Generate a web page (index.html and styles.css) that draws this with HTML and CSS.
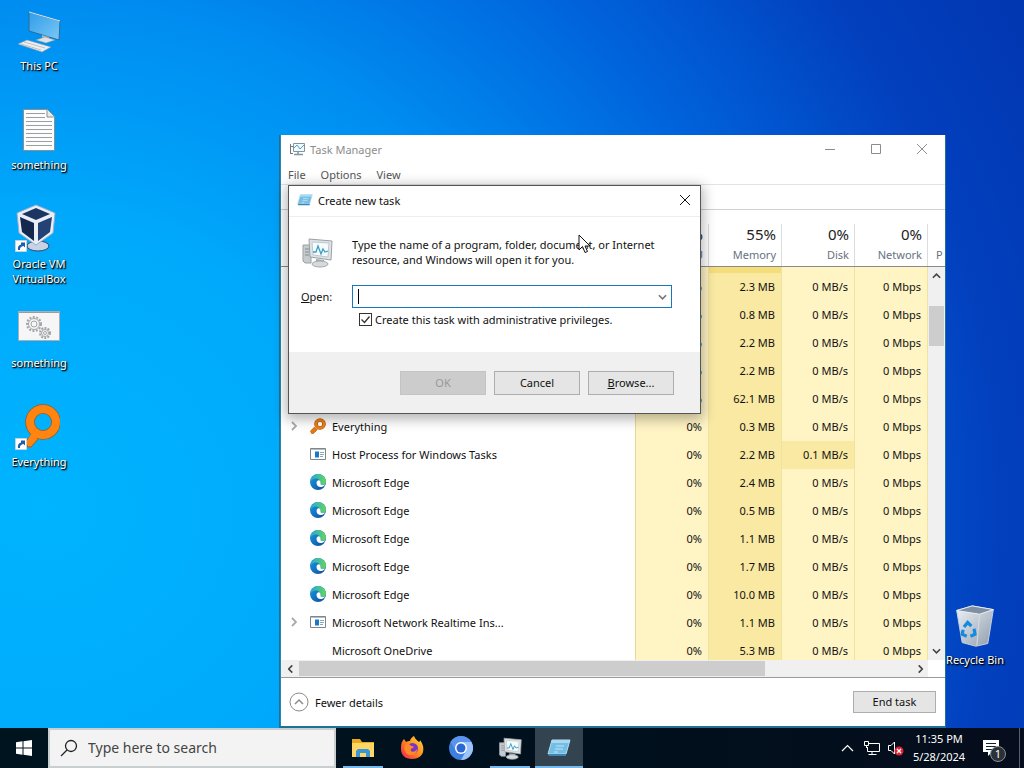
FILE: index.html
```html
<!DOCTYPE html>
<html lang="en">
<head>
    <meta charset="UTF-8">
    <meta name="viewport" content="width=device-width, initial-scale=1.0">
    <title>Desktop</title>
    <link rel="stylesheet" href="styles.css">
</head>
<body>
    <!-- shared icons -->
    <svg class="defs" width="0" height="0">
        <defs>
            <linearGradient id="edgeBlue" x1="0" y1="0" x2="1" y2="1">
                <stop offset="0" stop-color="#1b9de2"/>
                <stop offset="1" stop-color="#0c4a9e"/>
            </linearGradient>
            <linearGradient id="edgeGreen" x1="0" y1="0" x2="1" y2="0">
                <stop offset="0" stop-color="#27a5df"/>
                <stop offset="1" stop-color="#62d65a"/>
            </linearGradient>
            <linearGradient id="screen" x1="0" y1="0" x2="1" y2="1">
                <stop offset="0" stop-color="#2f9de8"/>
                <stop offset="1" stop-color="#7cc8f6"/>
            </linearGradient>
            <linearGradient id="flame" x1="1" y1="0" x2="0" y2="1">
                <stop offset="0" stop-color="#ffe23e"/>
                <stop offset="0.5" stop-color="#ff8a1e"/>
                <stop offset="1" stop-color="#f0185a"/>
            </linearGradient>
            <linearGradient id="bin" x1="0" y1="0" x2="1" y2="1">
                <stop offset="0" stop-color="#eef2f6"/>
                <stop offset="1" stop-color="#8f9cac"/>
            </linearGradient>
            <symbol id="edge" viewBox="0 0 16 16">
                <circle cx="8" cy="8" r="8" fill="url(#edgeBlue)"/>
                <path d="M1 5C3 1 6 0 8 0c5 0 8 4 8 7.500 0 2.500-2 3.500-4 3.500-2.500 0-1.500-1-1.500-2.500C10.500 6 8 4.500 5.500 4.500 3.500 4.500 1.800 5.500 0 8Z" fill="url(#edgeGreen)"/>
                <path d="M6.500 9c0-2 1.500-3 2.500-2.800 1 .2 1.500 1.200 1.500 2.200 0 1.600 0 2.600 2 2.600 1 0 2-.3 2.700-.8C14 12.500 12 13 10.500 13 8.500 13 6.500 11.500 6.500 9Z" fill="#fff"/>
            </symbol>
            <symbol id="host" viewBox="0 0 16 12">
                <path d="M.5.5h15v11H.5z" fill="#fff" stroke="#7f8688"/>
                <path d="M1 1.500h14" stroke="#b7bcbe"/>
                <path d="M5 3.500h4v6H5z" fill="#1a78c8"/>
                <path d="M10 4.500h4M10 6.500h4M10 8.500h3" stroke="#8ba9bd"/>
            </symbol>
            <symbol id="lens" viewBox="0 0 36 44">
                <path d="M11 27 1 38l3 5 3 0 9-10" fill="#ff8410" stroke="#a85a18"/>
                <circle cx="19" cy="18" r="13" fill="none" stroke="#9a5a20" stroke-width="9.500"/>
                <circle cx="19" cy="18" r="13" fill="none" stroke="#ff8410" stroke-width="8"/>
                <path d="M11 24 3 37l4 3 11-11" fill="#ff8410"/>
            </symbol>
            <symbol id="lensSmall" viewBox="0 0 16 16">
                <path d="m4.500 9-4 4 1 2.500h2l1-1 3-3" fill="#e8790f" stroke="#a8560f" stroke-width=".6"/>
                <circle cx="10" cy="6" r="4" fill="none" stroke="#a8560f" stroke-width="3.600"/>
                <circle cx="10" cy="6" r="4" fill="none" stroke="#f07f12" stroke-width="2.600"/>
            </symbol>
            <symbol id="shortcut" viewBox="0 0 12 12">
                <path d="M.5.5h11v11H.5z" fill="#fff" stroke="#c8d4dc"/>
                <path d="M3 10c-.5-3 .5-5 3-5.500V2.500h4v5L8.500 6C6 6.500 4.500 8 5 10Z" fill="#1d5fae"/>
            </symbol>
            <symbol id="pcs" viewBox="0 0 32 32">
                <path d="M2 9h8v18H4L2 25Z" fill="#c6cbce" stroke="#9aa1a5"/>
                <path d="M4 13h4M4 16h4M4 19h4" stroke="#858c90"/>
                <path d="m8 3 23 2-1 19-21-3Z" fill="#dfe3e5" stroke="#9aa1a5"/>
                <path d="m11 6 17 1-1 14-15-2Z" fill="#f5fbfd" stroke="#bfc8cc"/>
                <path d="M12 16h3l2-6 3 8 2-5 2 3 3-1" fill="none" stroke="#3f9fc2" stroke-width="1.300"/>
                <path d="m15 23 8 1v3h-8Z" fill="#a6adb0"/>
                <ellipse cx="19" cy="28" rx="8" ry="3" fill="#d5dadc" stroke="#a3aaae"/>
            </symbol>
            <symbol id="run" viewBox="0 0 24 18">
                <path d="M5 1h18l-4 14H1Z" fill="#74bde4" stroke="#b5def3"/>
                <path d="M5 1h18l-1 3H4Z" fill="#a9d9f1"/>
                <path d="M9 7h8M8 10h8M7 13h4" stroke="#c4e5f6" stroke-width="1.200"/>
                <path d="M1 15h18v2H2Z" fill="#3b86b4"/>
            </symbol>
            <symbol id="chevron" viewBox="0 0 10 6">
                <path d="m1 1 4 4 4-4" fill="none" stroke="currentColor" stroke-width="1.800"/>
            </symbol>
        </defs>
    </svg>

    <main class="desktop">
        <div class="shortcuts">
            <div class="shortcut">
                <svg viewBox="0 0 48 48">
                    <path d="m14 3 31 9-1 19-30-9Z" fill="url(#screen)" stroke="#2b6d9a"/>
                    <path d="m14 3 31 9" stroke="#d7e6ee"/>
                    <path d="m27 26 7 2v3h-7Z" fill="#aab4ba"/>
                    <path d="m21 31 9-3 10 3-9 3Z" fill="#dde3e6" stroke="#8d989e" stroke-width=".5"/>
                    <path d="m3 35 9-4 24 7-9 5Z" fill="#eceff1" stroke="#8d989e" stroke-width=".6"/>
                    <path d="m6 35 20 6M9 33l21 6" stroke="#a5afb5" stroke-width=".7"/>
                </svg>
                <span>This PC</span>
            </div>
            <div class="shortcut">
                <svg viewBox="0 0 48 48">
                    <path d="M8.500 1.500h24l7 7v34h-31Z" fill="#fdfdfd" stroke="#8a8f92"/>
                    <path d="M32 2v7h7" fill="#e6e9ea" stroke="#8a8f92"/>
                    <path d="M11 5.500h19M11 9.500h19M11 13.500h26M11 17.500h26M11 21.500h26M11 25.500h26M11 29.500h26M11 33.500h26M11 37.500h26" stroke="#9a9fa2"/>
                </svg>
                <span>something</span>
            </div>
            <div class="shortcut">
                <svg viewBox="0 0 48 48">
                    <ellipse cx="23" cy="39" rx="11" ry="5" fill="#c7d2e4" stroke="#33486b"/>
                    <path d="m21-2 19 8-2 20-17 12L4 26 2 6Z" fill="#e9eef6" stroke="#9badc8"/>
                    <path d="m21 1 14 6-14 6L7 7Z" fill="#1d3561"/>
                    <path d="m5 10 14 6v18L7 25Z" fill="#14284e"/>
                    <path d="m37 10-14 6v18l12-9Z" fill="#254274"/>
                    <use href="#shortcut" x="0" y="33" width="12" height="12"/>
                </svg>
                <span>Oracle VM<br>VirtualBox</span>
            </div>
            <div class="shortcut">
                <svg viewBox="0 0 48 48">
                    <path d="M3.500 5.500h41v29h-41z" fill="#f6f6f6" stroke="#a9afb2"/>
                    <path d="M4 6.500h40" stroke="#9c9c9c"/>
                    <g fill="none" stroke="#a2a6a8">
                        <circle cx="19" cy="18" r="7" stroke-width="2" stroke-dasharray="2 1.500"/>
                        <circle cx="19" cy="18" r="5.500"/>
                        <circle cx="19" cy="18" r="3"/>
                        <circle cx="30" cy="27" r="5" stroke-width="2" stroke-dasharray="2 1.200"/>
                        <circle cx="30" cy="27" r="3.500"/>
                        <circle cx="30" cy="27" r="1.500"/>
                    </g>
                </svg>
                <span>something</span>
            </div>
            <div class="shortcut">
                <svg viewBox="0 0 48 48">
                    <use href="#lens" x="9" y="-1" width="36" height="44"/>
                    <use href="#shortcut" x="0" y="33" width="12" height="12"/>
                </svg>
                <span>Everything</span>
            </div>
        </div>

        <div class="shortcut recycle-bin">
            <svg viewBox="0 0 48 48">
                <path d="m4 6 17-5 23 4-6 37-13 3-15-4Z" fill="url(#bin)" stroke="#c9d4e0"/>
                <path d="m4 6 17-5 23 4-15 5Z" fill="#7f8ea3" stroke="#eef3f8"/>
                <path d="m29 10-3 34" stroke="#d7dee6"/>
                <g fill="none" stroke="#168ae0" stroke-width="3.500">
                    <path d="m12 24 4-5 4 4M23 26l1 6-5 2M15 34l-5-2 1-5"/>
                </g>
            </svg>
            <span>Recycle Bin</span>
        </div>

        <section class="window task-manager">
            <header class="titlebar">
                <svg class="title-icon" viewBox="0 0 16 16">
                    <path d="M1.500 3v10M1 5.500h3M1 12.500h3" stroke="#777" fill="none"/>
                    <path d="M4.500 2.500h11v8h-11z" fill="#f4fbff" stroke="#8393a0"/>
                    <path d="m5 7 3-3 3 4 4-4" stroke="#4a9fd8" fill="none"/>
                    <path d="M9 11v2M5 13.500h9" stroke="#8393a0" stroke-width="1.500"/>
                </svg>
                <h1>Task Manager</h1>
                <button class="win-btn" aria-label="Minimize"><svg viewBox="0 0 12 12"><path d="M1 6.500h10"/></svg></button>
                <button class="win-btn" aria-label="Maximize"><svg viewBox="0 0 12 12"><path d="M1.500 1.500h9v9h-9z"/></svg></button>
                <button class="win-btn" aria-label="Close"><svg viewBox="0 0 12 12"><path d="m1 1 10 10M11 1 1 11"/></svg></button>
            </header>
            <nav class="menu">
                <button>File</button>
                <button>Options</button>
                <button>View</button>
            </nav>
            <div class="tabs"></div>

            <div class="list">
                <table>
                    <colgroup>
                        <col>
                        <col class="metric">
                        <col class="metric">
                        <col class="metric">
                        <col class="metric">
                        <col class="rest">
                    </colgroup>
                    <thead>
                        <tr>
                            <th></th>
                            <th><b>2%</b>CPU</th>
                            <th><b>55%</b>Memory</th>
                            <th><b>0%</b>Disk</th>
                            <th><b>0%</b>Network</th>
                            <th class="cut">P</th>
                        </tr>
                    </thead>
                    <tbody>
                        <tr class="group"><td></td><td></td><td></td><td></td><td></td><td></td></tr>
                        <tr><td></td><td>0%</td><td>2.3 MB</td><td>0 MB/s</td><td>0 Mbps</td><td></td></tr>
                        <tr><td></td><td>0%</td><td>0.8 MB</td><td>0 MB/s</td><td>0 Mbps</td><td></td></tr>
                        <tr><td></td><td>0%</td><td>2.2 MB</td><td>0 MB/s</td><td>0 Mbps</td><td></td></tr>
                        <tr><td></td><td>0%</td><td>2.2 MB</td><td>0 MB/s</td><td>0 Mbps</td><td></td></tr>
                        <tr><td></td><td>0%</td><td>62.1 MB</td><td>0 MB/s</td><td>0 Mbps</td><td></td></tr>
                        <tr>
                            <td><div class="process"><svg class="expand"><use href="#chevron"/></svg><svg class="app"><use href="#lensSmall"/></svg>Everything</div></td>
                            <td>0%</td><td>0.3 MB</td><td>0 MB/s</td><td>0 Mbps</td><td></td>
                        </tr>
                        <tr>
                            <td><div class="process"><i class="expand"></i><svg class="app"><use href="#host"/></svg>Host Process for Windows Tasks</div></td>
                            <td>0%</td><td>2.2 MB</td><td class="busy">0.1 MB/s</td><td>0 Mbps</td><td></td>
                        </tr>
                        <tr>
                            <td><div class="process"><i class="expand"></i><svg class="app"><use href="#edge"/></svg>Microsoft Edge</div></td>
                            <td>0%</td><td>2.4 MB</td><td>0 MB/s</td><td>0 Mbps</td><td></td>
                        </tr>
                        <tr>
                            <td><div class="process"><i class="expand"></i><svg class="app"><use href="#edge"/></svg>Microsoft Edge</div></td>
                            <td>0%</td><td>0.5 MB</td><td>0 MB/s</td><td>0 Mbps</td><td></td>
                        </tr>
                        <tr>
                            <td><div class="process"><i class="expand"></i><svg class="app"><use href="#edge"/></svg>Microsoft Edge</div></td>
                            <td>0%</td><td>1.1 MB</td><td>0 MB/s</td><td>0 Mbps</td><td></td>
                        </tr>
                        <tr>
                            <td><div class="process"><i class="expand"></i><svg class="app"><use href="#edge"/></svg>Microsoft Edge</div></td>
                            <td>0%</td><td>1.7 MB</td><td>0 MB/s</td><td>0 Mbps</td><td></td>
                        </tr>
                        <tr>
                            <td><div class="process"><i class="expand"></i><svg class="app"><use href="#edge"/></svg>Microsoft Edge</div></td>
                            <td>0%</td><td>10.0 MB</td><td>0 MB/s</td><td>0 Mbps</td><td></td>
                        </tr>
                        <tr>
                            <td><div class="process"><svg class="expand"><use href="#chevron"/></svg><svg class="app"><use href="#host"/></svg>Microsoft Network Realtime Ins...</div></td>
                            <td>0%</td><td>1.1 MB</td><td>0 MB/s</td><td>0 Mbps</td><td></td>
                        </tr>
                        <tr>
                            <td><div class="process"><i class="expand"></i><i class="app"></i>Microsoft OneDrive</div></td>
                            <td>0%</td><td>5.3 MB</td><td>0 MB/s</td><td>0 Mbps</td><td></td>
                        </tr>
                    </tbody>
                </table>
                <div class="scroll-v">
                    <svg class="arrow up"><use href="#chevron"/></svg>
                    <div class="thumb"></div>
                    <svg class="arrow"><use href="#chevron"/></svg>
                </div>
            </div>
            <div class="scroll-h">
                <svg class="arrow left"><use href="#chevron"/></svg>
                <div class="track"><div class="thumb"></div></div>
                <svg class="arrow right"><use href="#chevron"/></svg>
            </div>

            <footer class="tm-footer">
                <button class="fewer">
                    <svg viewBox="0 0 20 20" fill="none" stroke="#8c8c8c"><circle cx="10" cy="10" r="9"/><path d="m6 12 4-4 4 4" stroke-width="1.500"/></svg>
                    Fewer details
                </button>
                <button class="btn end-task">End task</button>
            </footer>
        </section>

        <form class="window dialog" onsubmit="return false">
            <header class="titlebar">
                <svg class="title-icon"><use href="#run"/></svg>
                <h2>Create new task</h2>
                <button type="button" class="win-btn" aria-label="Close"><svg viewBox="0 0 12 12"><path d="m1 1 10 10M11 1 1 11"/></svg></button>
            </header>
            <div class="dialog-body">
                <svg class="dialog-icon"><use href="#pcs"/></svg>
                <p>Type the name of a program, folder, document, or Internet resource, and Windows will open it for you.</p>
                <label for="open"><u>O</u>pen:</label>
                <div class="combo">
                    <i class="caret"></i>
                    <input type="text" id="open">
                    <button type="button" aria-label="Show history"><svg><use href="#chevron"/></svg></button>
                </div>
                <div class="admin">
                    <input type="checkbox" id="admin" checked>
                    <label for="admin">Create this task with administrative privileges.</label>
                </div>
            </div>
            <div class="dialog-footer">
                <button class="btn" disabled>OK</button>
                <button type="button" class="btn">Cancel</button>
                <button type="button" class="btn"><u>B</u>rowse...</button>
            </div>
        </form>

        <svg class="cursor" viewBox="0 0 13 20">
            <path d="M1 1v15l3.500-3.500L7 18.500l2.500-1L7 12h5Z" fill="#fff" stroke="#111"/>
        </svg>
    </main>

    <footer class="taskbar">
        <button class="start" aria-label="Start">
            <svg viewBox="0 0 16 16"><path d="m0 2.200 6.500-.9v6.200H0ZM7.500 1.200 16 0v7.500H7.500ZM0 8.500h6.500v6.200L0 13.800ZM7.500 8.500H16V16l-8.500-1.200Z" fill="#fff"/></svg>
        </button>
        <div class="search">
            <svg viewBox="0 0 18 18" fill="none" stroke="#222" stroke-width="1.300"><circle cx="11" cy="7" r="5.500"/><path d="m7 11-6 6"/></svg>
            <input type="text" placeholder="Type here to search" aria-label="Search">
        </div>
        <div class="apps">
            <button class="open" aria-label="File Explorer">
                <svg viewBox="0 0 24 24">
                    <path d="M1 3h8l2 3h12v15H1Z" fill="#e9a820"/>
                    <path d="M1 7h22v14H1Z" fill="#ffd564"/>
                    <path d="M5 21v-6l2-2h10l2 2v6h-4v-4H9v4Z" fill="#3b95d9"/>
                </svg>
            </button>
            <button aria-label="Firefox">
                <svg viewBox="0 0 24 24">
                    <path d="M2 6c1-2 2-3 2-3l2 3c1-1 3-1 4-1 0-2 2-4 4-5 1 3 3 4 5 6 1-1 1-1 1-2 3 4 4 8 3 12-1 4-5 7-11 7C5 23 1 19 1 13c0-3 0-5 1-7Z" fill="url(#flame)"/>
                    <circle cx="12.500" cy="12.500" r="5.500" fill="#7a35c8"/>
                    <path d="M5 9c3-2 5-1 6 1 3 0 3 1 2 2-2 0-3 2-2 3 2 2 5 0 6-2 0 4-3 6-6 6-5 0-8-5-6-10Z" fill="#ff8b22"/>
                </svg>
            </button>
            <button aria-label="Chromium">
                <svg viewBox="0 0 24 24">
                    <circle cx="12" cy="12" r="12" fill="#3f7fe0"/>
                    <path d="M12 6h10.400A12 12 0 0 1 12 24l5-9Z" fill="#9cc3fa"/>
                    <path d="M1.600 6A12 12 0 0 1 22.400 6H12l-5 9Z" fill="#5a94ec"/>
                    <circle cx="12" cy="12" r="6" fill="#fff"/>
                    <circle cx="12" cy="12" r="4.500" fill="#2b68d2"/>
                </svg>
            </button>
            <button class="open" aria-label="Task Manager">
                <svg><use href="#pcs"/></svg>
            </button>
            <button class="open active" aria-label="Create new task">
                <svg><use href="#run"/></svg>
            </button>
        </div>
        <div class="tray">
            <svg class="tray-up" viewBox="0 0 13 8"><path d="m1 7 5.500-5.500L12 7" fill="none" stroke="#fff" stroke-width="1.200"/></svg>
            <svg class="tray-icon" viewBox="0 0 16 16" fill="none" stroke="#fff"><path d="M5 3.500h10.500v8H3.500V7M8 12v2.500M4.500 14.500h8M.5 1.500h4v4h-4zM2.500 6v2"/></svg>
            <svg class="tray-icon" viewBox="0 0 16 16"><path d="M.5 5.500H3l3.500-3.500v12L3 10.500H.5Z" fill="none" stroke="#fff"/><circle cx="11" cy="11" r="4.500" fill="#dc2334"/><path d="m9 9 4 4M13 9l-4 4" stroke="#fff" stroke-width="1.300"/></svg>
            <div class="clock">
                <time>11:35 PM</time>
                <time>5/28/2024</time>
            </div>
            <button class="notify" aria-label="Notifications">
                <svg viewBox="0 0 16 16"><path d="M0 0h16v12h-7l-4 4v-4H0Z" fill="#fff"/><path d="M3 3.500h10M3 6.500h10M3 9.500h6" stroke="#10202c"/></svg>
                <span class="badge">1</span>
            </button>
        </div>
    </footer>
</body>
</html>
```
FILE: styles.css
```css
* {
    box-sizing: border-box;
}
body {
    margin: 0;
    height: 100vh;
    display: flex;
    flex-direction: column;
    overflow: hidden;
    font-family: "Noto Sans", "Open Sans", sans-serif;
    font-size: 11px;
    line-height: 15px;
    color: #111;
}
button, input {
    font: inherit;
    color: inherit;
}
button {
    padding: 0;
    border: 0;
    background: none;
}
h1, h2, p {
    margin: 0;
    font-size: inherit;
    font-weight: normal;
}
.defs {
    position: absolute;
}

/* desktop */
.desktop {
    position: relative;
    flex: 1;
    background: radial-gradient(ellipse 1100px 1040px at 4% 70%, #00b4ff 0, #00a9fb 28%, #008ef1 48%, #0064dc 68%, #0240be 87%, #0237b2 100%);
}
.shortcuts {
    display: grid;
    grid-auto-rows: 99px;
    width: 78px;
}
.shortcut {
    display: flex;
    flex-direction: column;
    align-items: center;
    padding-top: 9px;
    color: #fff;
    text-align: center;
    white-space: nowrap;
    text-shadow: 1px 1px 2px #000, 1px 1px 1px #000;
}
.shortcut svg {
    width: 48px;
    height: 48px;
    margin-bottom: 1px;
    overflow: visible;
}
.recycle-bin {
    position: absolute;
    top: 594px;
    left: 936px;
    width: 78px;
}
.recycle-bin svg {
    width: 44px;
}

/* windows */
.window {
    position: absolute;
    display: flex;
    flex-direction: column;
    background: #fff;
}
.titlebar {
    display: flex;
    align-items: center;
    height: 30px;
    padding-bottom: 2px;
}
.titlebar h1, .titlebar h2 {
    flex: 1;
}
.title-icon {
    width: 16px;
    height: 16px;
    margin: 0 5px 0 8px;
}
.win-btn {
    width: 46px;
    height: 28px;
}
.win-btn svg {
    display: block;
    width: 12px;
    height: 12px;
    margin: 0 auto;
    fill: none;
    stroke: currentColor;
}
.btn {
    width: 86px;
    height: 24px;
    padding-bottom: 2px;
    border: 1px solid #adadad;
    background: #e5e5e5;
}
.btn:disabled {
    border-color: #c4c4c4;
    background: #ccc;
    color: #999;
}

/* task manager */
.task-manager {
    top: 135px;
    bottom: 2px;
    left: 280px;
    width: 665px;
    border-left: 1px solid #2a86b0;
    box-shadow: 0 1px 0 1px #1f6f96;
}
.task-manager .titlebar {
    color: #8c8c8c;
}
.menu {
    display: flex;
    gap: 15px;
    height: 20px;
    padding-left: 7px;
    border-bottom: 1px solid #e3e3e3;
    color: #555;
}
.tabs {
    height: 25px;
    border-bottom: 1px solid #d0d0d0;
}
.list {
    position: relative;
    flex: 1;
    overflow: hidden;
}
table {
    width: 100%;
    border-collapse: separate;
    border-spacing: 0;
    table-layout: fixed;
}
.metric {
    width: 73px;
}
.rest {
    width: 17px;
}
th {
    height: 57px;
    padding: 10px 6px 0 0;
    border-bottom: 1px solid #8a8a8a;
    font-weight: normal;
    text-align: right;
    color: #66727f;
    background: linear-gradient(#dcdcdc, #dcdcdc) right 14px / 1px 43px no-repeat;
}
th b {
    display: block;
    margin-bottom: 3px;
    font-size: 15px;
    line-height: 20px;
    font-weight: normal;
    color: #222;
}
th.cut {
    padding: 33px 0 0 8px;
    background: none;
    text-align: left;
}
td {
    height: 28px;
    padding: 0 6px 2px 0;
    border-right: 1px solid #efe3a0;
    background: #fff4c4;
    text-align: right;
    white-space: nowrap;
}
td:first-child {
    border-right-color: #e6d98f;
    background: none;
    text-align: left;
}
td:nth-child(3) {
    background: #f9e9a2;
}
td.busy {
    background: #f9e9a2;
}
.group td {
    height: 6px;
}
.group td:nth-child(3) {
    background: #f5dd7c;
}
.process {
    display: flex;
    align-items: center;
    padding-left: 8px;
}
.expand {
    width: 10px;
    height: 6px;
    margin-right: 11px;
    color: #aaa;
    transform: rotate(-90deg);
}
.app {
    width: 16px;
    height: 16px;
    margin-right: 6px;
}
.arrow {
    width: 9px;
    height: 6px;
    flex: none;
    color: #444;
}
.scroll-v {
    position: absolute;
    top: 57px;
    right: 0;
    bottom: 0;
    width: 17px;
    display: flex;
    flex-direction: column;
    align-items: center;
    padding: 6px 0;
    background: #f0f0f0;
}
.scroll-v .thumb {
    width: 15px;
    height: 40px;
    margin: 27px 0 auto;
    background: #cdcdcd;
}
.scroll-h {
    display: flex;
    align-items: center;
    height: 18px;
    padding: 0 20px 0 5px;
    border-bottom: 1px solid #9a9a9a;
    background: linear-gradient(to left, #fff 17px, #f0f0f0 17px);
}
.scroll-h .track {
    flex: 1;
    margin: 0 4px;
}
.scroll-h .thumb {
    width: 76%;
    height: 15px;
    background: #cdcdcd;
}
.up {
    transform: rotate(180deg);
}
.left {
    transform: rotate(90deg);
}
.right {
    transform: rotate(-90deg);
}
.tm-footer {
    display: flex;
    align-items: center;
    justify-content: space-between;
    height: 48px;
    padding: 0 9px 0 8px;
}
.fewer {
    display: flex;
    align-items: center;
    gap: 6px;
}
.fewer svg {
    width: 20px;
    height: 20px;
}
.end-task {
    width: 83px;
    height: 22px;
}

/* create new task */
.dialog {
    top: 185px;
    left: 288px;
    width: 413px;
    border: 1px solid #555;
    box-shadow: 0 3px 12px 2px rgba(0, 0, 0, 0.3);
}
.dialog .titlebar {
    height: 31px;
    border-bottom: 1px solid #eee;
}
.dialog .win-btn {
    width: 30px;
}
.dialog-body {
    display: grid;
    grid-template-columns: 51px 320px;
    align-items: center;
    padding: 19px 0 21px 12px;
}
.dialog-icon {
    width: 32px;
    height: 32px;
}
.combo {
    position: relative;
    display: flex;
    height: 23px;
    margin-top: 17px;
    border: 1px solid #1878b8;
}
.dialog-body > label {
    margin-top: 17px;
}
.combo input {
    flex: 1;
    padding: 0 6px;
    border: 0;
    outline: 0;
}
.combo button {
    width: 17px;
    color: #777;
}
.combo svg {
    display: block;
    width: 9px;
    height: 6px;
    margin: 0 auto;
}
.caret {
    position: absolute;
    top: 3px;
    left: 5px;
    width: 1px;
    height: 15px;
    background: #000;
}
.admin {
    grid-column: 2;
    display: flex;
    align-items: center;
    gap: 3px;
    height: 23px;
    padding-left: 7px;
}
.admin input {
    appearance: none;
    width: 13px;
    height: 13px;
    margin: 0;
    border: 1px solid #333;
    background: #fff;
}
.admin input:checked {
    background: url("data:image/svg+xml,%3Csvg xmlns='http://www.w3.org/2000/svg' viewBox='0 0 11 11'%3E%3Cpath d='m1.500 5.500 3 3 5-6' fill='none' stroke='%23333' stroke-width='1.300'/%3E%3C/svg%3E");
}
.dialog-footer {
    display: flex;
    justify-content: flex-end;
    gap: 8px;
    padding: 19px 26px 18px 0;
    background: #f0f0f0;
}
.cursor {
    position: absolute;
    top: 234px;
    left: 578px;
    width: 13px;
    height: 20px;
}

/* taskbar */
.taskbar {
    display: flex;
    height: 40px;
    background: linear-gradient(to right, #001420, #00101c 60%, #060d1c);
    color: #fff;
}
.start {
    width: 48px;
}
.start svg {
    display: block;
    width: 16px;
    height: 16px;
    margin: 0 auto;
}
.search {
    display: flex;
    align-items: center;
    gap: 10px;
    width: 288px;
    padding-left: 10px;
    border: 2px solid #c9ced1;
    background: #f3f3f3;
}
.search svg {
    width: 18px;
    height: 18px;
}
.search input {
    flex: 1;
    min-width: 0;
    padding: 0;
    border: 0;
    outline: 0;
    background: none;
    font-size: 14px;
    line-height: 20px;
}
.search input::placeholder {
    color: #444;
    opacity: 1;
}
.apps {
    display: flex;
    gap: 1px;
    margin-left: 3px;
}
.apps button {
    width: 48px;
}
.apps svg {
    display: block;
    width: 24px;
    height: 24px;
    margin: 0 auto;
}
.apps .open {
    background: linear-gradient(#76b9ed, #76b9ed) center bottom / 40px 2px no-repeat;
}
.apps .active {
    background-color: #33434f;
    background-size: 48px 2px;
}
.tray {
    display: flex;
    align-items: center;
    gap: 8px;
    margin-left: auto;
    margin-right: 4px;
    padding-right: 15px;
    border-right: 1px solid #56606a;
}
.tray-up {
    width: 13px;
    height: 8px;
    margin-right: 2px;
}
.tray-icon {
    width: 16px;
    height: 16px;
}
.clock {
    display: flex;
    flex-direction: column;
    gap: 3px;
    width: 54px;
    padding-bottom: 2px;
    text-align: center;
    white-space: nowrap;
}
.notify {
    position: relative;
    width: 21px;
    height: 16px;
    margin-left: 9px;
}
.notify svg {
    display: block;
    width: 16px;
    height: 16px;
}
.badge {
    position: absolute;
    top: 6px;
    left: 7px;
    width: 16px;
    height: 16px;
    border: 1px solid #8a9096;
    border-radius: 50%;
    background: #2a3238;
    line-height: 14px;
}
```
